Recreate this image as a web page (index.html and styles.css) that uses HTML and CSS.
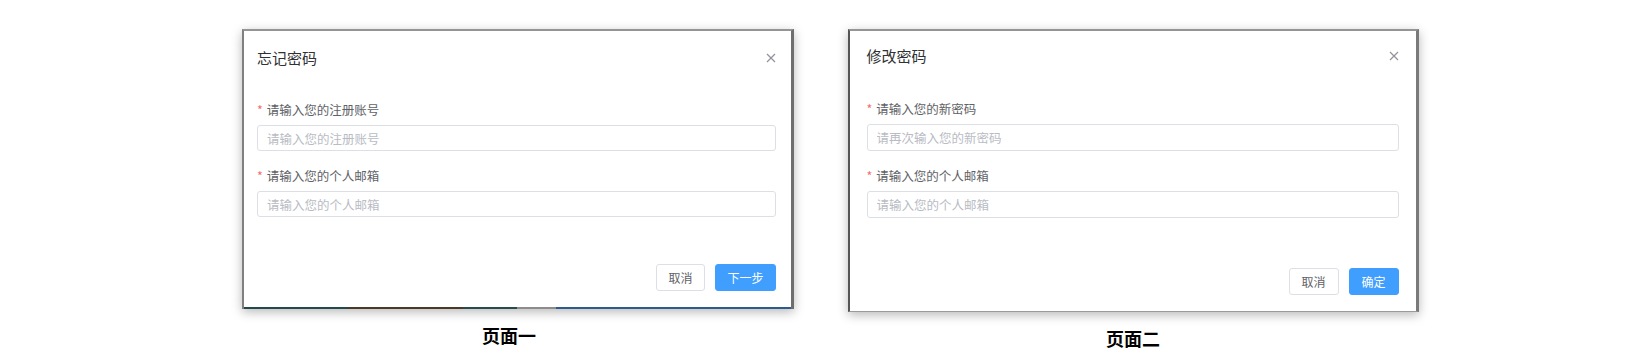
FILE: index.html
```html
<!DOCTYPE html>
<html lang="zh-CN">
<head>
  <meta charset="UTF-8">
  <title>页面截图</title>
  <link rel="stylesheet" href="styles.css">
</head>
<body>
  <div class="gallery">
    <div class="shot">
      <div class="dialog dialog-one">
        <div class="dialog-header">
          <span class="dialog-title">忘记密码</span>
          <svg class="close" viewBox="0 0 10 10"><path d="M1 1L9 9M9 1L1 9"/></svg>
        </div>
        <div class="dialog-body">
          <div class="field">
            <label class="label"><span class="req">*</span>请输入您的注册账号</label>
            <input class="input" type="text" placeholder="请输入您的注册账号">
          </div>
          <div class="field">
            <label class="label"><span class="req">*</span>请输入您的个人邮箱</label>
            <input class="input" type="text" placeholder="请输入您的个人邮箱">
          </div>
        </div>
        <div class="dialog-footer">
          <button class="btn">取消</button>
          <button class="btn btn-primary wide">下一步</button>
        </div>
        <div class="backdrop-strip"></div>
      </div>
      <div class="caption">页面一</div>
    </div>

    <div class="shot">
      <div class="dialog dialog-two">
        <div class="dialog-header">
          <span class="dialog-title">修改密码</span>
          <svg class="close" viewBox="0 0 10 10"><path d="M1 1L9 9M9 1L1 9"/></svg>
        </div>
        <div class="dialog-body">
          <div class="field">
            <label class="label"><span class="req">*</span>请输入您的新密码</label>
            <input class="input" type="password" placeholder="请再次输入您的新密码">
          </div>
          <div class="field">
            <label class="label"><span class="req">*</span>请输入您的个人邮箱</label>
            <input class="input" type="text" placeholder="请输入您的个人邮箱">
          </div>
        </div>
        <div class="dialog-footer">
          <button class="btn">取消</button>
          <button class="btn btn-primary">确定</button>
        </div>
      </div>
      <div class="caption">页面二</div>
    </div>
  </div>
</body>
</html>
```

FILE: styles.css
```css
body {
  margin: 0;
  background: #fff;
  font-family: "Noto Sans CJK SC", "Noto Sans", Arial, sans-serif;
}
.gallery {
  display: flex;
  justify-content: center;
  gap: 54px;
  padding: 29px 0 0 4px;
}
.shot {
  width: 570px;
  display: flex;
  flex-direction: column;
  align-items: center;
}
.dialog {
  background: #fff;
  box-sizing: border-box;
  border-top: 2px solid #959595;
  border-left: 2px solid #808080;
  border-right: 3px solid #6e6e6e;
  box-shadow: 0 3px 10px rgba(0,0,0,0.28);
  display: flex;
  flex-direction: column;
}
.dialog-one {
  width: 552px;
  align-self: flex-end;
  padding: 17px 15px 0 13px;
}
.dialog-two {
  width: 571px;
  padding: 15px 17px 16px 17px;
  border-left-color: #555;
  border-right-color: #7a7a7a;
  border-bottom: 1px solid #9a9a9a;
}
.dialog-header {
  display: flex;
  align-items: center;
  justify-content: space-between;
  height: 20px;
}
.dialog-title {
  font-size: 15px;
  line-height: 20px;
  color: #303133;
}
.close {
  width: 10px;
  height: 10px;
  fill: none;
  stroke: #909399;
  stroke-width: 1.2;
}
.dialog-body {
  padding-top: 32px;
  display: flex;
  flex-direction: column;
  gap: 15px;
}
.dialog-two .dialog-body {
  padding-top: 33px;
}
.field {
  display: flex;
  flex-direction: column;
  gap: 5px;
}
.label {
  font-size: 12.5px;
  line-height: 20px;
  color: #606266;
}
.req {
  color: #f56c6c;
  margin-right: 4px;
}
.input {
  height: 26px;
  box-sizing: border-box;
  border: 1px solid #dcdfe6;
  border-radius: 3px;
  padding: 0 9px;
  font-family: inherit;
  font-size: 12.5px;
  color: #606266;
  outline: none;
}
.dialog-two .input {
  height: 27px;
}
.input::placeholder {
  color: #b9bcc4;
}
.dialog-footer {
  display: flex;
  justify-content: flex-end;
  gap: 10px;
  padding: 47px 0 16px 0;
}
.dialog-two .dialog-footer {
  padding: 50px 0 0 0;
}
.btn {
  height: 27px;
  width: 49px;
  border: 1px solid #dcdfe6;
  border-radius: 3px;
  background: #fff;
  color: #606266;
  font-family: inherit;
  font-size: 12px;
  padding: 0;
}
.dialog-two .btn {
  width: 50px;
}
.btn-primary {
  background: #409eff;
  border-color: #409eff;
  color: #fff;
}
.wide {
  width: 61px;
}
.backdrop-strip {
  height: 2px;
  margin: 0 -15px 0 -13px;
  background: linear-gradient(90deg, #234a4a 0 19%, #4a3926 19% 40%, #264c4c 40% 50%, #8c8c8c 50% 57%, #2f5a8e 57% 100%);
}
.caption {
  margin-top: 14px;
  font-size: 18px;
  line-height: 24px;
  font-weight: bold;
  color: #000;
}
```
